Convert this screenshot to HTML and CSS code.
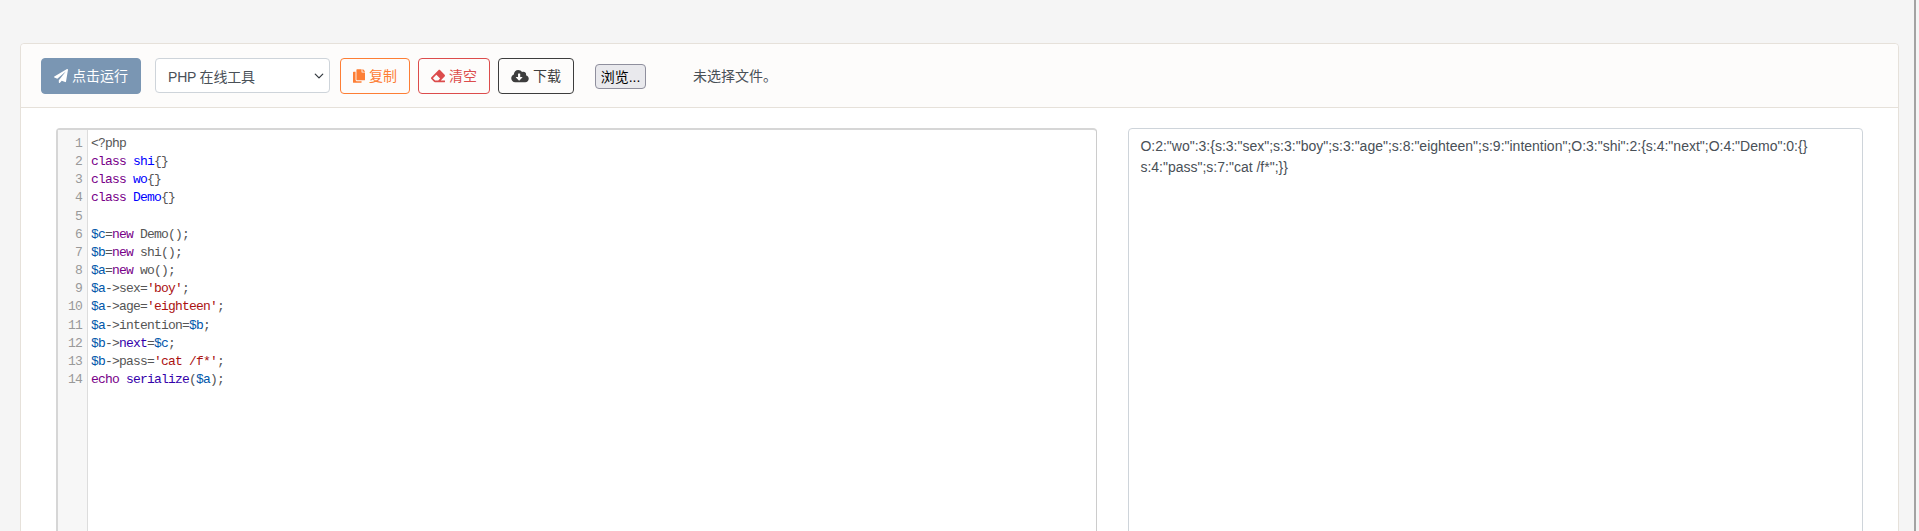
FILE: index.html
```html
<!DOCTYPE html>
<html lang="zh">
<head>
<meta charset="utf-8">
<title>PHP 在线工具</title>
<link rel="stylesheet" href="styles.css">
</head>
<body>
<main class="page">
  <section class="card">
    <header class="toolbar">
      <button class="btn btn-run"><svg class="ic" viewBox="0 0 512 512"><path d="M476 3.2L12.5 270.6c-18.1 10.4-15.8 35.6 2.2 43.2L121 358.4l287.3-253.2c5.5-4.9 13.3 2.6 8.6 8.3L176 407v80.5c0 23.6 28.5 32.9 42.5 15.8L282 426l124.6 52.2c14.2 6 30.4-2.9 33-18.2l72-432C515 7.8 493.3-6.8 476 3.2z"/></svg>点击运行</button>
      <div class="select">PHP 在线工具<svg class="chev" viewBox="0 0 16 16"><path d="M2 5l6 6 6-6" fill="none" stroke="#343a40" stroke-width="2" stroke-linecap="round" stroke-linejoin="round"/></svg></div>
      <button class="btn btn-copy"><svg class="ic ic-copy" viewBox="0 0 448 512"><path d="M320 448v40c0 13.255-10.745 24-24 24H24c-13.255 0-24-10.745-24-24V120c0-13.255 10.745-24 24-24h72v296c0 30.879 25.121 56 56 56h168zm0-344V0H152c-13.255 0-24 10.745-24 24v368c0 13.255 10.745 24 24 24h272c13.255 0 24-10.745 24-24V128H344c-13.2 0-24-10.8-24-24zm120.971-31.029L375.029 7.029A24 24 0 0 0 358.059 0H352v96h96v-6.059a24 24 0 0 0-7.029-16.97z"/></svg>复制</button>
      <button class="btn btn-clear"><svg class="ic" viewBox="0 0 512 512"><path d="M497.941 273.941c18.745-18.745 18.745-49.137 0-67.882l-160-160c-18.745-18.745-49.136-18.746-67.883 0l-256 256c-18.745 18.745-18.745 49.137 0 67.882l96 96A48.004 48.004 0 0 0 144 480h356c6.627 0 12-5.373 12-12v-40c0-6.627-5.373-12-12-12H355.883l142.058-142.059zm-302.627-62.627l137.373 137.373L265.373 416H150.628l-80-80 124.686-124.686z"/></svg>清空</button>
      <button class="btn btn-down"><svg class="ic ic-cloud" viewBox="0 0 640 512"><path d="M537.6 226.6c4.1-10.7 6.4-22.4 6.4-34.6 0-53-43-96-96-96-19.7 0-38.1 6-53.3 16.2C367 64.2 315.3 32 256 32c-88.4 0-160 71.6-160 160 0 2.7.1 5.4.2 8.1C40.2 219.8 0 273.2 0 336c0 79.5 64.5 144 144 144h368c70.7 0 128-57.3 128-128 0-61.9-44-113.6-102.4-125.4zm-132.9 88.7L299.3 420.7c-6.2 6.2-16.4 6.2-22.6 0L171.3 315.3c-10.1-10.1-2.9-27.3 11.3-27.3H248V176c0-8.8 7.2-16 16-16h48c8.8 0 16 7.2 16 16v112h65.4c14.2 0 21.4 17.2 11.3 27.3z"/></svg>下载</button>
      <div class="file">
        <button class="browse">浏览...</button>
        <span class="file-name">未选择文件。</span>
      </div>
    </header>
    <div class="body">
      <div class="editor">
        <div class="gutter">
          <div>1</div><div>2</div><div>3</div><div>4</div><div>5</div><div>6</div><div>7</div><div>8</div><div>9</div><div>10</div><div>11</div><div>12</div><div>13</div><div>14</div>
        </div>
        <pre class="code"><span class="m">&lt;?php</span>
<span class="k">class</span> <span class="d">shi</span><span class="m">{}</span>
<span class="k">class</span> <span class="d">wo</span><span class="m">{}</span>
<span class="k">class</span> <span class="d">Demo</span><span class="m">{}</span>

<span class="v">$c</span><span class="m">=</span><span class="k">new</span><span class="m"> Demo();</span>
<span class="v">$b</span><span class="m">=</span><span class="k">new</span><span class="m"> shi();</span>
<span class="v">$a</span><span class="m">=</span><span class="k">new</span><span class="m"> wo();</span>
<span class="v">$a</span><span class="m">-&gt;sex=</span><span class="s">'boy'</span><span class="m">;</span>
<span class="v">$a</span><span class="m">-&gt;age=</span><span class="s">'eighteen'</span><span class="m">;</span>
<span class="v">$a</span><span class="m">-&gt;intention=</span><span class="v">$b</span><span class="m">;</span>
<span class="v">$b</span><span class="m">-&gt;</span><span class="b">next</span><span class="m">=</span><span class="v">$c</span><span class="m">;</span>
<span class="v">$b</span><span class="m">-&gt;pass=</span><span class="s">'cat /f*'</span><span class="m">;</span>
<span class="k">echo</span> <span class="b">serialize</span><span class="m">(</span><span class="v">$a</span><span class="m">);</span></pre>
      </div>
      <div class="output">O:2:"wo":3:{s:3:"sex";s:3:"boy";s:3:"age";s:8:"eighteen";s:9:"intention";O:3:"shi":2:{s:4:"next";O:4:"Demo":0:{}<wbr>s:4:"pass";s:7:"cat /f*";}}</div>
    </div>
  </section>
</main>
<div class="edge"></div>
</body>
</html>
```
FILE: styles.css
```css
* { box-sizing: border-box; }
html, body { margin: 0; height: 100%; overflow: hidden; }
body {
  display: flex;
  background: #f5f5f5;
  font-family: "Liberation Sans", "Noto Sans CJK SC", sans-serif;
  font-size: 14px;
  color: #495057;
}
.page { flex: 1; padding: 43px 0 0 20px; height: 531px; }
.edge { width: 2px; margin-right: 3px; background: #a3a3a3; }
.card {
  width: 1879px;
  height: 700px;
  background: #fff;
  border: 1px solid #e6e1da;
  border-radius: 4px;
}
.toolbar {
  height: 64px;
  display: flex;
  align-items: flex-start;
  padding: 14px 20px 0;
  background: #fdfcfb;
  border-bottom: 1px solid #e6e1da;
  border-radius: 4px 4px 0 0;
}
.btn {
  height: 36px;
  display: flex;
  align-items: center;
  justify-content: center;
  gap: 4px;
  padding: 0 0 2px;
  background: transparent;
  border: 1px solid;
  border-radius: 4px;
  font: 14px "Liberation Sans", "Noto Sans CJK SC", sans-serif;
}
.ic { width: 14px; height: 14px; margin-top: 2px; fill: currentColor; }
.ic-copy { width: 12px; }
.ic-cloud { width: 18px; }
.btn-run { width: 100px; background: #7a96b3; border-color: #7a96b3; color: #fff; }
.select {
  width: 175px;
  height: 35px;
  margin-left: 14px;
  padding-left: 12px;
  display: flex;
  align-items: center;
  justify-content: space-between;
  background: #fff;
  border: 1px solid #ced4da;
  border-radius: 4px;
  color: #495057;
  letter-spacing: -0.2px;
}
.chev { width: 10px; height: 10px; margin-right: 5px; }
.btn-copy { width: 70px; margin-left: 10px; color: #fd7e35; border-color: #fd7e35; }
.btn-clear { width: 72px; margin-left: 8px; color: #dc4c4c; border-color: #dc4c4c; }
.btn-down { width: 76px; margin-left: 8px; color: #3d3d3d; border-color: #3d3d3d; }
.file { display: flex; align-items: center; height: 36px; margin-left: 21px; }
.browse {
  width: 51px;
  height: 25px;
  padding: 0;
  background: #e9e9ed;
  border: 1px solid #8f8f9d;
  border-radius: 4px;
  font: 14px "Liberation Sans", "Noto Sans CJK SC", sans-serif;
  color: #000;
}
.file-name { margin-left: 47px; padding-bottom: 2px; color: #495057; }
.body {
  display: flex;
  gap: 31px;
  padding: 20px 35px 0;
}
.editor {
  width: 1042px;
  height: 560px;
  display: flex;
  background: #fff;
  border: 1px solid #ccc;
  border-top-width: 2px;
  border-left-width: 2px;
  border-top-color: #d6d6d6;
  border-left-color: #d6d6d6;
  border-radius: 4px 4px 0 0;
}
.gutter {
  width: 30px;
  padding: 5px 5px 0 0;
  background: #f7f7f7;
  border-right: 1px solid #ddd;
  text-align: right;
  font: 13px/18.15px "Liberation Mono", monospace;
  letter-spacing: -0.8px;
  color: #999;
}
.code {
  margin: 0;
  padding: 5px 0 0 3px;
  font: 13px/18.15px "Liberation Mono", monospace;
  letter-spacing: -0.8px;
  color: #555;
}
.k { color: #708; }
.d { color: #00f; }
.v { color: #05a; }
.s { color: #a11; }
.b { color: #30a; }
.m { color: #555; }
.output {
  width: 735px;
  height: 560px;
  padding: 7px 11px;
  border: 1px solid #ced4da;
  border-radius: 4px 4px 0 0;
  line-height: 21px;
  color: #495057;
}
```
